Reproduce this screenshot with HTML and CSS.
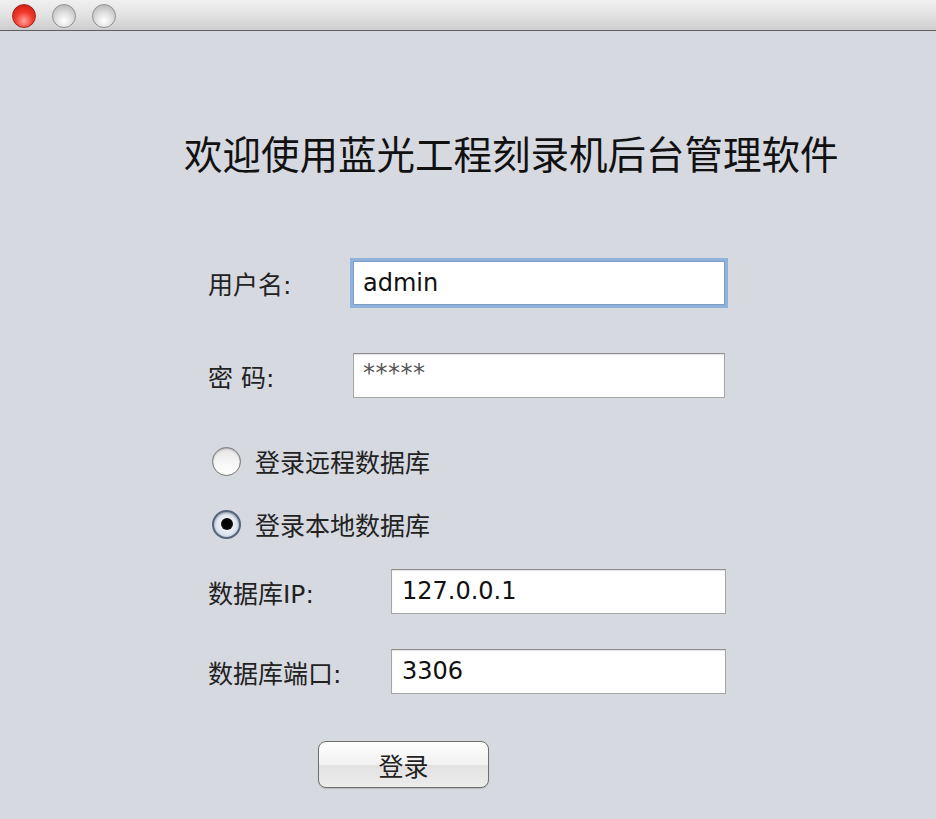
FILE: index.html
```html
<!DOCTYPE html>
<html lang="zh">
<head>
<meta charset="utf-8">
<title>登录</title>
<link rel="stylesheet" href="styles.css">
</head>
<body>
<div class="window">
  <div class="titlebar">
    <span class="light red"></span>
    <span class="light grey"></span>
    <span class="light grey"></span>
  </div>
  <div class="content">
    <h1 class="title">欢迎使用蓝光工程刻录机后台管理软件</h1>
    <div class="form">
      <div class="row row-user">
        <span class="label label-short">用户名:</span>
        <div class="field field-short focused">admin</div>
      </div>
      <div class="row row-pass">
        <span class="label label-short">密 码:</span>
        <div class="field field-short pass">*****</div>
      </div>
      <div class="radio-row radio-first">
        <span class="radio"></span>
        <span class="radio-text">登录远程数据库</span>
      </div>
      <div class="radio-row radio-second">
        <span class="radio checked"><span class="dot"></span></span>
        <span class="radio-text">登录本地数据库</span>
      </div>
      <div class="row row-ip">
        <span class="label label-long">数据库IP:</span>
        <div class="field field-long">127.0.0.1</div>
      </div>
      <div class="row row-port">
        <span class="label label-long">数据库端口:</span>
        <div class="field field-long">3306</div>
      </div>
      <div class="button-row">
        <div class="button">登录</div>
      </div>
    </div>
  </div>
</div>
</body>
</html>
```
FILE: styles.css
```css
html, body {
  margin: 0;
  padding: 0;
}
body {
  width: 936px;
  height: 819px;
  overflow: hidden;
  background: #d6d9e0;
  font-family: "DejaVu Sans", "Noto Sans CJK SC", sans-serif;
  color: #1a1a1a;
}
.window {
  width: 936px;
  height: 819px;
  background: #d6d9e0;
}
.titlebar {
  height: 31px;
  border-bottom: 1px solid #5f5f5f;
  background: linear-gradient(to bottom, #f0f0f0 0%, #e0e0e0 55%, #cdcdcd 100%);
  display: flex;
  align-items: center;
  gap: 16px;
  padding-left: 12px;
  padding-top: 1px;
  box-sizing: border-box;
}
.light {
  width: 24px;
  height: 24px;
  border-radius: 50%;
  box-sizing: border-box;
}
.light.red {
  background: radial-gradient(circle at 50% 72%, #ffa49a 0%, #f2392c 45%, #c3140c 100%);
  border: 1px solid #a02a22;
}
.light.grey {
  background: radial-gradient(circle at 50% 72%, #ffffff 0%, #dddddd 45%, #ababab 100%);
  border: 1px solid #909090;
}
.content {
  padding-left: 184px;
}
.title {
  margin: 98px 0 0 0;
  font-family: "Noto Sans CJK SC", sans-serif;
  font-weight: normal;
  font-size: 38.5px;
  line-height: 46px;
  color: #111;
  letter-spacing: 0;
}
.form {
  padding-left: 24px;
}
.row {
  display: flex;
  align-items: center;
}
.label {
  font-family: "DejaVu Sans", "Noto Sans CJK SC", sans-serif;
  font-size: 25px;
  color: #222;
  flex: none;
}
.label-short {
  width: 145px;
}
.label-long {
  width: 183px;
}
.field {
  height: 45px;
  box-sizing: border-box;
  background: #ffffff;
  border: 1px solid #a6a6a6;
  border-top-color: #8e8e8e;
  box-shadow: inset 0 1px 1px rgba(0,0,0,0.12);
  font-family: "DejaVu Sans", sans-serif;
  font-size: 24px;
  line-height: 43px;
  padding-left: 9px;
  color: #111;
}
.field-short {
  width: 372px;
}
.field-long {
  width: 335px;
  padding-left: 10px;
}
.field.focused {
  border-color: #7f9fc6;
  box-shadow: 0 0 0 3px #8fb2dc;
  height: 44px;
}
.field.pass {
  line-height: 38px;
  color: #555;
  letter-spacing: 0.5px;
}
.row-user {
  margin-top: 86px;
}
.row-pass {
  margin-top: 48px;
}
.radio-row {
  display: flex;
  align-items: center;
  height: 30px;
}
.radio-first {
  margin-top: 48px;
}
.radio-second {
  margin-top: 33px;
}
.radio {
  width: 29px;
  height: 29px;
  border-radius: 50%;
  box-sizing: border-box;
  margin-left: 4px;
  margin-right: 14px;
  border: 1px solid #767676;
  background: linear-gradient(to bottom, #e4e4e4 0%, #f8f8f8 60%, #ffffff 100%);
  box-shadow: inset 0 1px 2px rgba(0,0,0,0.25);
  display: flex;
  align-items: center;
  justify-content: center;
}
.radio.checked {
  border: 2px solid #56657a;
  background: radial-gradient(circle at 50% 50%, #ffffff 0%, #dfe6ef 55%, #aab8ca 100%);
  box-shadow: inset 0 1px 2px rgba(0,0,0,0.3);
}
.dot {
  width: 12px;
  height: 12px;
  border-radius: 50%;
  background: radial-gradient(circle at 50% 45%, #000 0%, #0a0a0a 60%, #333 100%);
}
.radio-text {
  font-family: "Noto Sans CJK SC", sans-serif;
  font-size: 25px;
  color: #222;
}
.row-ip {
  margin-top: 30px;
}
.row-port {
  margin-top: 35px;
}
.button-row {
  margin-top: 47px;
  padding-left: 110px;
}
.button {
  width: 171px;
  height: 47px;
  box-sizing: border-box;
  border: 1px solid #6e6e6e;
  border-radius: 8px;
  background: linear-gradient(to bottom, #ffffff 0%, #f1f1f1 50%, #e2e2e2 51%, #ececec 100%);
  box-shadow: 0 1px 1px rgba(0,0,0,0.15);
  font-family: "Noto Sans CJK SC", sans-serif;
  font-size: 25px;
  color: #222;
  display: flex;
  align-items: center;
  justify-content: center;
}
```
